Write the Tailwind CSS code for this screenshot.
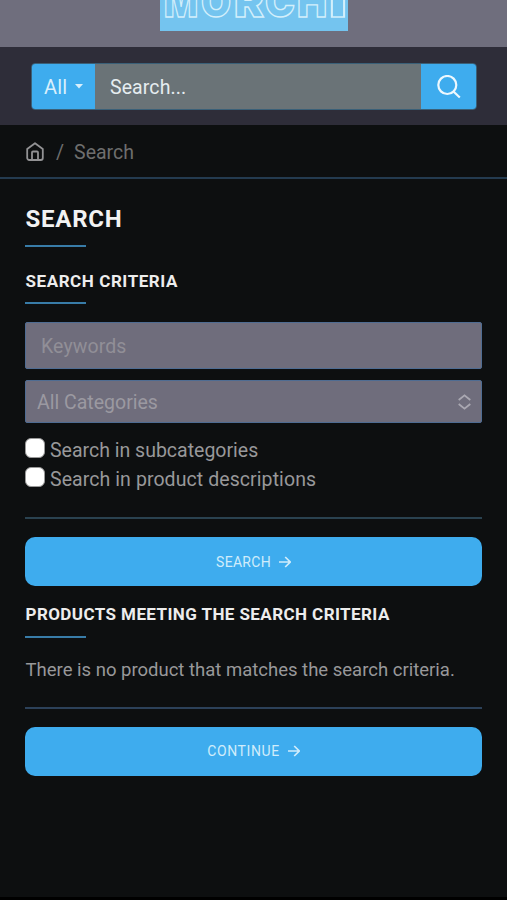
<!DOCTYPE html>
<html lang="en">
<head>
<meta charset="utf-8">
<title>Search</title>
<script src="https://cdn.jsdelivr.net/npm/@tailwindcss/browser@4"></script>
</head>
<body class="h-[900px] overflow-hidden border-b-3 border-black bg-[#0d0f10] font-['Roboto','Noto_Sans',sans-serif] text-[#98989a]">
<header>
  <div class="flex h-[47px] items-start justify-center bg-[#6f6e7d]">
    <svg class="h-[31px] w-[188px] bg-[#74c4ef]" viewBox="160 0 188 31" fill="none" stroke="#d3effb" stroke-width="1.4" font-family="Inter" font-weight="900" font-size="43">
      <text x="164" y="17" textLength="34" lengthAdjust="spacingAndGlyphs">M</text>
      <text x="201" y="17" textLength="30" lengthAdjust="spacingAndGlyphs">O</text>
      <text x="234" y="17" textLength="30" lengthAdjust="spacingAndGlyphs">R</text>
      <text x="265" y="17" textLength="30" lengthAdjust="spacingAndGlyphs">C</text>
      <text x="297" y="17" textLength="30" lengthAdjust="spacingAndGlyphs">H</text>
      <text x="329" y="17" textLength="18" lengthAdjust="spacingAndGlyphs">I</text>
    </svg>
  </div>
  <div class="h-[78px] bg-[#2e2d39] px-[31px] pt-4">
    <div class="flex h-[47px] w-[446px] overflow-hidden rounded border border-[#3a6078] text-xl text-[#e6edf0]">
      <button class="flex w-[63px] items-center bg-[#3eacee] pl-3 text-[#d8effc]"><span class="tracking-[0.2px]">All</span>
        <svg class="ml-2 h-[5px] w-2" viewBox="0 0 8 5" fill="currentColor"><path d="M0 0h8L4 4.500z"/></svg>
      </button>
      <div class="flex flex-1 items-center bg-[#6a7377] pt-0.5 pl-[15px] text-[19.5px] tracking-[0.1px]">Search...</div>
      <button class="flex w-[55px] items-center justify-center bg-[#3eacee]">
        <svg class="size-6" viewBox="0 0 24 24" fill="none" stroke="#edf8fe" stroke-width="2.2"><circle cx="10.300" cy="10" r="9"/><path d="M16.500 16.500l6.300 6"/></svg>
      </button>
    </div>
  </div>
</header>
<nav class="flex h-[54px] items-center border-b-2 border-[#243b50] pt-[3px] pl-[26px] text-[19.5px] text-[#6e6e6e]">
  <svg class="-mt-0.5 h-[19px] w-[18px]" viewBox="0 0 18 19" fill="none" stroke="#929294" stroke-width="1.800" stroke-linejoin="round"><path d="M1.200 7L9 1.200l7.800 5.800V16a2 2 0 0 1-2 2H3.200a2 2 0 0 1-2-2z"/><path d="M6 18v-7.500a1 1 0 0 1 1-1h4a1 1 0 0 1 1 1V18"/></svg>
  <span class="ml-3">/</span>
  <span class="ml-[10px] pt-px">Search</span>
</nav>
<main class="px-[25px]">
  <h1 class="pt-[24px] pl-[0.5px] text-2xl leading-8 font-bold tracking-[0.75px] text-[#f2f2f2]">SEARCH</h1>
  <div class="mt-[10px] h-0.5 w-[61px] bg-[#387ca8]"></div>
  <h2 class="mt-[22px] pl-[0.5px] text-[17px] leading-6 font-bold tracking-[0.57px] text-[#ededed]">SEARCH CRITERIA</h2>
  <div class="mt-[9px] h-0.5 w-[61px] bg-[#387ca8]"></div>
  <div class="mt-[18px] flex h-[47px] items-center rounded-xs border border-[#4f6c92] bg-[#6f6d7c] pt-0.5 pl-[15px] text-[19.5px] tracking-[0.1px] text-[#918f97]">Keywords</div>
  <div class="mt-[11px] flex h-[43px] items-center justify-between rounded-xs border border-[#4f6c92] bg-[#6f6d7c] pr-[10px] pl-[11px] text-[19.5px] text-[#9b99a1]"><span class="pt-0.5">All Categories</span>
    <svg class="h-4 w-[13px]" viewBox="0 0 13 16" fill="none" stroke="#aaa8b2" stroke-width="1.800"><path d="M.7 6L6.500 1.300 12.300 6M.7 10l5.800 4.700L12.300 10"/></svg>
  </div>
  <div class="mt-3 flex h-[29px] text-[19.5px] leading-[31px]"><i class="mt-[3px] mr-[5px] size-[20px] rounded-[6px] border border-[#999] bg-white"></i><span>Search in subcategories</span></div>
  <div class="flex h-[29px] text-[19.5px] leading-[31px]"><i class="mt-[3px] mr-[5px] size-[20px] rounded-[6px] border border-[#999] bg-white"></i><span class="tracking-[0.08px]">Search in product descriptions</span></div>
  <div class="mt-6 h-[1.5px] bg-[#2a4250]"></div>
  <button class="mt-[18.5px] flex h-[49px] w-full items-center justify-center rounded-[10px] bg-[#3eacee] text-sm text-[#d0ecfb]"><span class="tracking-[0.3px]">SEARCH</span>
    <svg class="ml-2 h-3 w-3" viewBox="0 0 12 12" fill="none" stroke="currentColor" stroke-width="1.700"><path d="M0 6h11M6.200 1l5 5-5 5"/></svg>
  </button>
  <h2 class="mt-4 pl-[0.5px] text-[17px] leading-6 font-bold tracking-[0.42px] text-[#ededed]">PRODUCTS MEETING THE SEARCH CRITERIA</h2>
  <div class="mt-[10px] h-0.5 w-[61px] bg-[#387ca8]"></div>
  <p class="mt-4 pl-[0.5px] text-[18.5px] leading-8">There is no product that matches the search criteria.</p>
  <div class="mt-[21px] h-[1.5px] bg-[#2c4159]"></div>
  <button class="mt-[18px] flex h-[49px] w-full items-center justify-center rounded-[10px] bg-[#3eacee] text-sm text-[#d0ecfb]"><span class="tracking-[0.6px]">CONTINUE</span>
    <svg class="ml-2 h-3 w-3" viewBox="0 0 12 12" fill="none" stroke="currentColor" stroke-width="1.700"><path d="M0 6h11M6.200 1l5 5-5 5"/></svg>
  </button>
</main>
</body>
</html>
